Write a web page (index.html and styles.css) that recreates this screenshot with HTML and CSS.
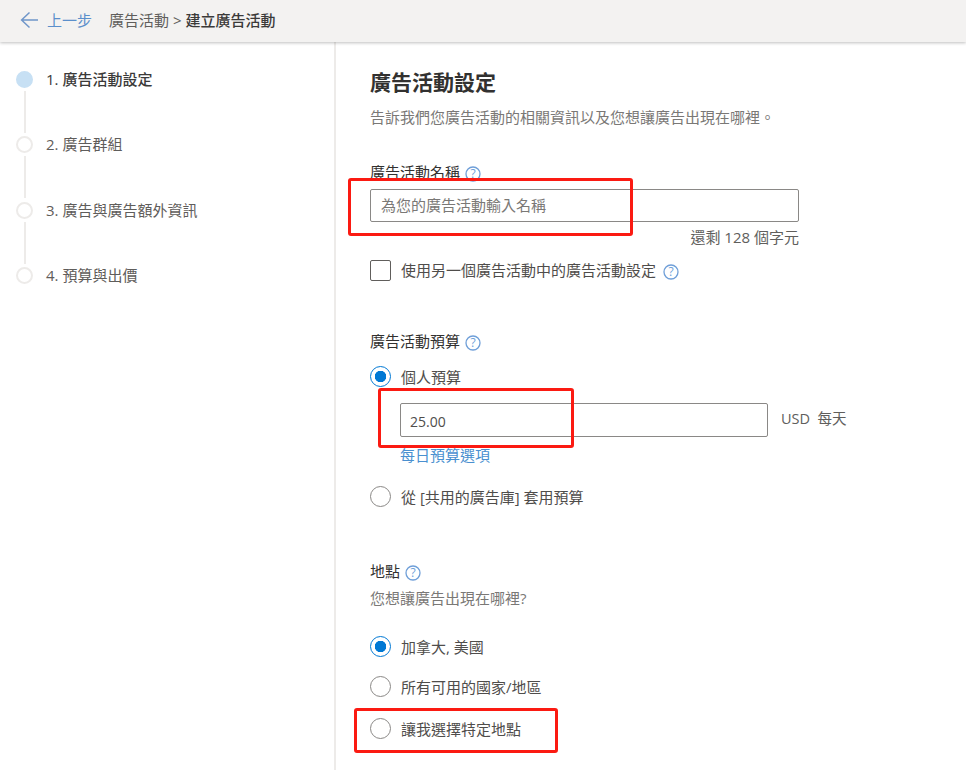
FILE: index.html
```html
<!DOCTYPE html>
<html lang="zh-Hant">
<head>
<meta charset="utf-8">
<title>建立廣告活動</title>
<link rel="stylesheet" href="styles.css">
</head>
<body>
<header class="topbar">
  <svg class="back-icon" width="19" height="18" viewBox="0 0 19 18"><path d="M9.5 1.5 1.6 9l7.9 7.5M1.6 9H18" fill="none" stroke="#6f96c9" stroke-width="1.5"/></svg>
  <a class="back-link">上一步</a>
  <span class="crumb">廣告活動 &gt; <span class="crumb-current">建立廣告活動</span></span>
</header>
<div class="layout">
  <nav class="steps">
    <div class="step step-active"><span class="dot"></span><span class="step-label">1. 廣告活動設定</span></div>
    <div class="step"><span class="dot"></span><span class="step-label">2. 廣告群組</span></div>
    <div class="step"><span class="dot"></span><span class="step-label">3. 廣告與廣告額外資訊</span></div>
    <div class="step step-last"><span class="dot"></span><span class="step-label">4. 預算與出價</span></div>
  </nav>
  <main class="content">
    <h1 class="title">廣告活動設定</h1>
    <p class="subtitle">告訴我們您廣告活動的相關資訊以及您想讓廣告出現在哪裡。</p>

    <section class="name-section">
      <div class="label">廣告活動名稱 <svg class="help" viewBox="0 0 16 16"><circle cx="8" cy="8" r="7" fill="none" stroke="#6f9fd8" stroke-width="1.3"/><text x="8" y="12.2" text-anchor="middle" class="help-q">?</text></svg></div>
      <div class="input input-name"><span class="placeholder">為您的廣告活動輸入名稱</span></div>
      <div class="counter">還剩 128 個字元</div>
      <div class="option option-check"><span class="checkbox"></span><span>使用另一個廣告活動中的廣告活動設定</span> <svg class="help help-inline" viewBox="0 0 16 16"><circle cx="8" cy="8" r="7" fill="none" stroke="#6f9fd8" stroke-width="1.3"/><text x="8" y="12.2" text-anchor="middle" class="help-q">?</text></svg></div>
      <div class="mark mark-name"></div>
    </section>

    <section class="budget-section">
      <div class="label">廣告活動預算 <svg class="help" viewBox="0 0 16 16"><circle cx="8" cy="8" r="7" fill="none" stroke="#6f9fd8" stroke-width="1.3"/><text x="8" y="12.2" text-anchor="middle" class="help-q">?</text></svg></div>
      <div class="option option-first"><span class="radio radio-on"></span><span>個人預算</span></div>
      <div class="budget-row">
        <div class="input input-budget"><span class="amount">25.00</span></div>
        <span class="unit">USD&nbsp; 每天</span>
      </div>
      <a class="link">每日預算選項</a>
      <div class="option option-shared"><span class="radio"></span><span>從 [共用的廣告庫] 套用預算</span></div>
      <div class="mark mark-budget"></div>
    </section>

    <section class="place-section">
      <div class="label">地點 <svg class="help" viewBox="0 0 16 16"><circle cx="8" cy="8" r="7" fill="none" stroke="#6f9fd8" stroke-width="1.3"/><text x="8" y="12.2" text-anchor="middle" class="help-q">?</text></svg></div>
      <p class="hint">您想讓廣告出現在哪裡?</p>
      <div class="option option-place option-canada"><span class="radio radio-on"></span><span>加拿大, 美國</span></div>
      <div class="option option-place"><span class="radio"></span><span>所有可用的國家/地區</span></div>
      <div class="option option-place option-specific"><span class="radio"></span><span>讓我選擇特定地點</span></div>
      <div class="mark mark-place"></div>
    </section>
  </main>
</div>
</body>
</html>
```
FILE: styles.css
```css
* { box-sizing: border-box; }
html, body { height: 100%; }
body {
  margin: 0;
  height: 770px;
  overflow: hidden;
  background: #fff;
  color: #4a4846;
  font-family: "Open Sans", "Noto Sans CJK TC", sans-serif;
  font-size: 15px;
  line-height: 20px;
}
.topbar {
  height: 42px;
  background: #f3f2f1;
  box-shadow: 0 1px 3px rgba(0,0,0,.25);
  display: flex;
  align-items: center;
  padding: 0 0 2px 20px;
  position: relative;
  z-index: 1;
}
.back-icon { margin-right: 8px; }
.back-link { color: #5b8fcb; margin-right: 17px; }
.crumb { color: #605e5c; }
.crumb-current { color: #3b3a39; font-weight: 500; }
.layout { display: flex; height: 728px; }
.steps {
  width: 336px;
  flex: none;
  border-right: 2px solid #edebe9;
  padding: 29px 0 0 16px;
}
.step { display: flex; height: 65.3px; position: relative; color: #5f5d5b; }
.step::after {
  content: "";
  position: absolute;
  left: 7.5px;
  top: 20px;
  width: 2px;
  height: 42px;
  background: #edebe9;
}
.step-last::after { display: none; }
.dot {
  width: 17px;
  height: 17px;
  border-radius: 50%;
  border: 2px solid #edebe9;
  background: #fff;
  flex: none;
  margin-right: 13px;
}
.step-active .dot { background: #c7e0f4; border-color: #c7e0f4; }
.step-active { color: #3b3a39; font-weight: 500; }
.step-label { margin-top: -2px; }
.content { flex: 1; padding: 25px 0 0 34px; min-width: 0; }
.title { margin: 0; font-size: 21px; line-height: 30px; font-weight: 600; color: #323130; }
.subtitle { margin: 10px 0 0; color: #7a7876; }
section { position: relative; width: 520px; }
.name-section { margin-top: 35px; }
.label { display: flex; align-items: center; gap: 5px; color: #323130; }
.help { width: 16px; height: 16px; margin-top: 4px; }
.help-inline { margin-left: 7px; }
.help-q { font: 12px "Open Sans", sans-serif; fill: #6f9fd8; }
.input {
  border: 1px solid #8a8886;
  border-radius: 2px;
  background: #fff;
  height: 34px;
  display: flex;
  align-items: center;
  padding-left: 10px;
}
.input-name { width: 429px; margin-top: 7px; height: 33px; color: #7a7876; }
.placeholder { margin-top: -2px; }
.counter { width: 429px; text-align: right; color: #605e5c; margin-top: 5px; height: 20px; }
.option { display: flex; align-items: center; color: #4f4d4b; }
.option-check { margin-top: 9px; height: 28px; }
.checkbox {
  width: 21px; height: 21px;
  border: 1px solid #605e5c;
  border-radius: 2px;
  margin-right: 10px;
  flex: none;
}
.radio {
  width: 21px; height: 21px;
  border: 1.5px solid #8a8886;
  border-radius: 50%;
  margin-right: 10px;
  flex: none;
  background: #fff;
}
.radio-on {
  border-color: #0078d4;
  background: radial-gradient(circle, #0078d4 0 5.5px, #fff 6px);
}
.budget-section { margin-top: 47px; }
.option-first { margin-top: 15px; height: 21px; }
.budget-row { display: flex; align-items: center; margin: 16px 0 0 30px; }
.input-budget { width: 368px; color: #4f4d4b; font-size: 14px; padding-left: 9px; }
.amount { margin-top: 3px; }
.unit { margin-left: 13px; color: #605e5c; margin-top: -3px; font-size: 14.5px; }
.link { display: block; margin: 8px 0 0 30px; color: #4a90d0; }
.option-shared { margin-top: 21px; height: 21px; }
.place-section { margin-top: 54px; }
.hint { margin: 7px 0 0; color: #7a7876; }
.option-place { height: 21px; margin-top: 19px; }
.option-canada { margin-top: 28px; }
.option-specific { margin-top: 21px; }
.mark {
  position: absolute;
  border: 3px solid #fb1a12;
  border-radius: 3px;
}
.mark-name { left: -22px; top: 16px; width: 285px; height: 58px; }
.mark-budget { left: 8px; top: 57px; width: 196px; height: 60px; }
.mark-place { left: -16px; top: 147px; width: 204px; height: 45px; }
```
